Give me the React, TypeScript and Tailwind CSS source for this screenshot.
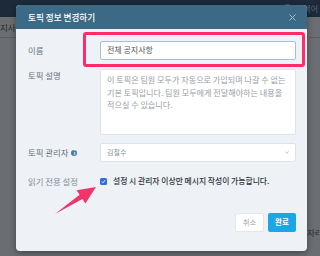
import React from "react";

const font = { fontFamily: '"Noto Sans CJK KR", "Noto Sans", sans-serif' };

export default function App() {
  return (
    <div className="relative w-[320px] h-[256px] overflow-hidden bg-[#6a6d71]" style={font}>
      {/* background page (dimmed) */}
      <div className="h-[17px] bg-[#1c2a39] flex items-center justify-end pr-[2px]">
        <div className="w-[9px] h-[9px] rounded-full border border-[#55677a] mr-[4px]" />
        <span className="text-[8px] text-[#55677a] leading-none">검색어</span>
      </div>
      <div className="h-[21px] border-b border-[#5a5d61] flex items-center text-[8.5px] text-[#2b2c2e]">
        지사
      </div>
      <div className="flex justify-end pt-[190px] pr-[1px] text-[8.5px] text-[#2b2c2e] leading-none">
        <span className="w-[12px] overflow-hidden whitespace-nowrap">자리</span>
      </div>

      {/* modal */}
      <div className="absolute left-[16px] top-[5px] w-[291px] h-[246px] rounded-[4px] bg-[#eef2f7] shadow-[0_2px_6px_rgba(0,0,0,0.35)] overflow-hidden flex flex-col">
        <div className="h-[24px] bg-[#3c6985] flex items-center justify-between pl-[12px] pr-[11px]">
          <span className="text-[8.6px] font-medium text-white leading-none">토픽 정보 변경하기</span>
          <svg width="7" height="7" viewBox="0 0 7 7">
            <path d="M0.5 0.5 L6.5 6.5 M6.5 0.5 L0.5 6.5" stroke="#a9c0cf" strokeWidth="1" />
          </svg>
        </div>

        <div className="flex flex-col pl-[12px] pr-[11px] pt-[12px] text-[8.4px] leading-[12.5px]">
          {/* name */}
          <div className="flex items-center h-[19px]">
            <div className="w-[72px] text-[#6a7077]">이름</div>
            <div className="flex-1 h-[19px] bg-white border border-[#a9bfd2] rounded-[2px] flex items-center pl-[6px] text-[8px] text-[#555]">
              전체 공지사항
            </div>
          </div>
          {/* description */}
          <div className="flex mt-[9px]">
            <div className="w-[72px] text-[#6a7077] pt-[0px]">토픽 설명</div>
            <div className="flex-1 h-[66px] bg-white border border-[#dde3ea] rounded-[2px] pl-[6px] pr-[5px] pt-[4px] text-[8.1px] text-[#979da3] break-keep">
              이 토픽은 팀원 모두가 자동으로 가입되며 나갈 수 없는 기본 토픽입니다. 팀원 모두에게 전달해야하는 내용을 적으실 수 있습니다.
            </div>
          </div>
          {/* manager */}
          <div className="flex items-center mt-[8px] h-[19px]">
            <div className="w-[72px] flex items-center text-[#6a7077]">
              <span>토픽 관리자</span>
              <span className="ml-[3px] w-[6px] h-[6px] rounded-full bg-[#4b7ca3] text-white text-[5px] leading-[6px] font-bold flex items-center justify-center">i</span>
            </div>
            <div className="flex-1 h-[19px] bg-white border border-[#dde3ea] rounded-[2px] flex items-center justify-between pl-[6px] pr-[6px] text-[7px] text-[#8a9097]">
              <span>김철수</span>
              <svg width="4" height="3" viewBox="0 0 4 3">
                <path d="M0.3 0.5 L2 2.3 L3.7 0.5" stroke="#9aa0a6" strokeWidth="0.7" fill="none" />
              </svg>
            </div>
          </div>
          {/* read only */}
          <div className="flex items-center mt-[13px] h-[12px]">
            <div className="w-[72px] text-[#858b92]">읽기 전용 설정</div>
            <div className="w-[7px] h-[7px] rounded-[1.5px] bg-[#2f6fd6] flex items-center justify-center">
              <svg width="5" height="5" viewBox="0 0 5 5">
                <path d="M0.8 2.6 L2 3.8 L4.2 1.1" stroke="white" strokeWidth="0.9" fill="none" />
              </svg>
            </div>
            <span className="ml-[6px] text-[7.8px] text-[#2e3338] font-medium">설정 시 관리자 이상만 메시지 작성이 가능합니다.</span>
          </div>
          {/* buttons */}
          <div className="flex justify-end gap-[4px] mt-[26px]">
            <div className="w-[29px] h-[19px] bg-white border border-[#e3e6ea] rounded-[2px] flex items-center justify-center text-[7.3px] text-[#a0a4a8]">
              취소
            </div>
            <div className="w-[28px] h-[19px] bg-[#1ba6e6] rounded-[2px] flex items-center justify-center text-[7.5px] font-bold text-white">
              완료
            </div>
          </div>
        </div>
      </div>

      {/* annotation: red highlight box */}
      <div className="absolute left-[83px] top-[32px] w-[222px] h-[35px] border-[3px] border-[#ff2c68] rounded-[3px]" />

      {/* annotation: arrow */}
      <svg className="absolute left-0 top-0" width="320" height="256" viewBox="0 0 320 256">
        <polygon
          points="55,214 79.6,194.8 76.6,190.2 96,187 85.4,203.6 82.4,199"
          fill="#f2346c"
        />
      </svg>
    </div>
  );
}
